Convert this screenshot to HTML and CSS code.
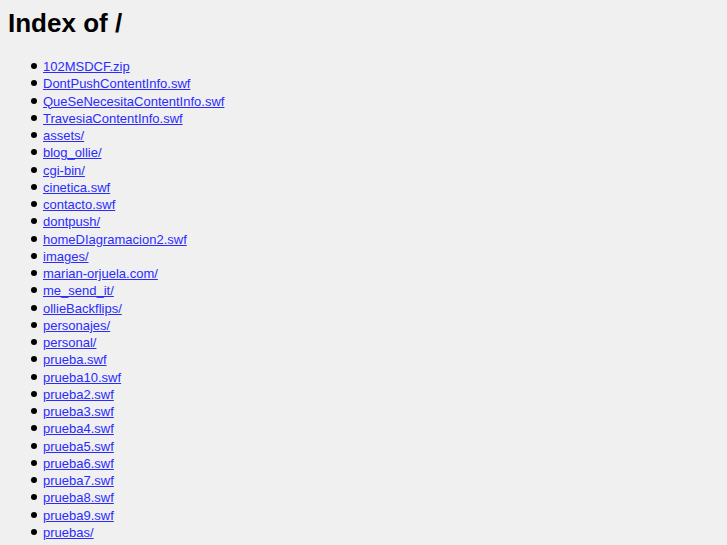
FILE: index.html
```html
<!DOCTYPE html>
<html lang="en">
<head>
    <meta charset="UTF-8">
    <title>Index of /</title>
    <link rel="stylesheet" href="styles.css">
</head>
<body>
    <h1>Index of /</h1>
    <ul class="listing">
        <li><a href="#">102MSDCF.zip</a></li>
        <li><a href="#">DontPushContentInfo.swf</a></li>
        <li><a href="#">QueSeNecesitaContentInfo.swf</a></li>
        <li><a href="#">TravesiaContentInfo.swf</a></li>
        <li><a href="#">assets/</a></li>
        <li><a href="#">blog_ollie/</a></li>
        <li><a href="#">cgi-bin/</a></li>
        <li><a href="#">cinetica.swf</a></li>
        <li><a href="#">contacto.swf</a></li>
        <li><a href="#">dontpush/</a></li>
        <li><a href="#">homeDIagramacion2.swf</a></li>
        <li><a href="#">images/</a></li>
        <li><a href="#">marian-orjuela.com/</a></li>
        <li><a href="#">me_send_it/</a></li>
        <li><a href="#">ollieBackflips/</a></li>
        <li><a href="#">personajes/</a></li>
        <li><a href="#">personal/</a></li>
        <li><a href="#">prueba.swf</a></li>
        <li><a href="#">prueba10.swf</a></li>
        <li><a href="#">prueba2.swf</a></li>
        <li><a href="#">prueba3.swf</a></li>
        <li><a href="#">prueba4.swf</a></li>
        <li><a href="#">prueba5.swf</a></li>
        <li><a href="#">prueba6.swf</a></li>
        <li><a href="#">prueba7.swf</a></li>
        <li><a href="#">prueba8.swf</a></li>
        <li><a href="#">prueba9.swf</a></li>
        <li><a href="#">pruebas/</a></li>
    </ul>
</body>
</html>
```

FILE: styles.css
```css
body {
    font-family: 'Liberation Sans', Arial, sans-serif;
    background: #f0f0f0;
    color: #000;
    margin: 8px;
    font-size: 13px;
}
h1 {
    font-size: 26px;
    margin: 0;
}
.listing {
    margin: 19px 0;
    padding-left: 35px;
    line-height: 17.25px;
    list-style: none;
}
.listing li::before {
    content: "";
    display: inline-block;
    width: 6px;
    height: 6px;
    border-radius: 50%;
    background: #000;
    margin-left: -12px;
    margin-right: 6px;
    vertical-align: 2px;
}
.listing a {
    color: #2b2bff;
}
```
